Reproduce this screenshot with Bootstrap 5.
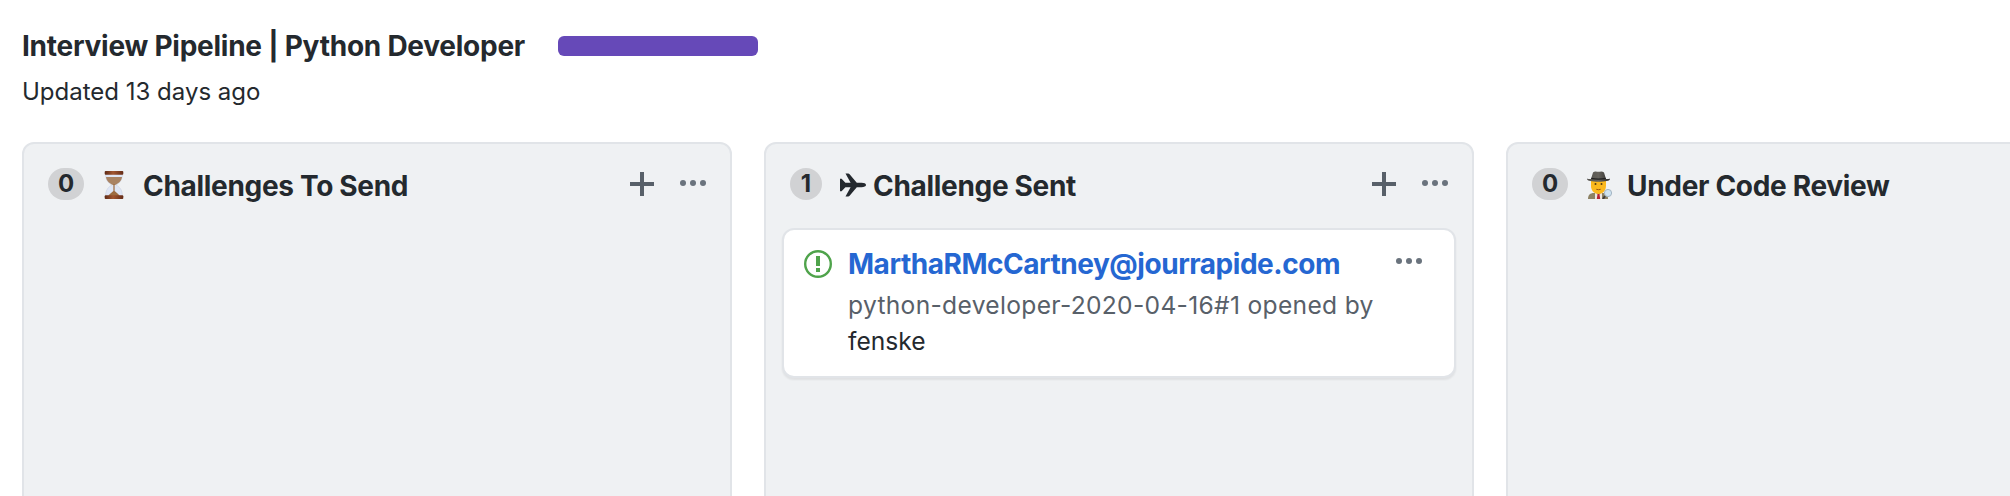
<!DOCTYPE html>
<html lang="en">
<head>
<meta charset="utf-8">
<meta name="viewport" content="width=device-width, initial-scale=1">
<title>Interview Pipeline | Python Developer</title>
<link href="https://cdn.jsdelivr.net/npm/bootstrap@5.3.0/dist/css/bootstrap.min.css" rel="stylesheet">
<style>
  body { font-family: Inter, "Liberation Sans", sans-serif; font-size: 24px; line-height: 36px; color: #24292e; background: #fff; overflow: hidden; }
  .board-page { height: 496px; padding: 25px 0 0 22px; overflow: hidden; }
  .board-head { height: 42px; }
  .head-title, .col-title, .issue-title { font-size: 28px; line-height: 42px; font-weight: 650; letter-spacing: -.31px; white-space: nowrap; }
  .head-title { width: 536px; letter-spacing: -.25px; }
  .board-bar { width: 200px; height: 20px; border-radius: 6px; background: #6649b8; }
  .updated { margin-top: 7px; }
  .board-cols { gap: 32px; margin-top: 32px; }
  .board-col { width: 710px; height: 700px; background: #eff1f3; border: 2px solid #e1e4e8; border-radius: 12px; padding: 20px 16px; }
  .col-head { height: 42px; padding: 0 8px; }
  .col-title { padding-top: 1px; }
  .count-pill { height: 32px; width: 36px; margin-top: 4px; line-height: 32px; border-radius: 16px; background: #d1d2d4; font-weight: 650; text-align: center; }
  .count-one { width: 32px; }
  .tools { gap: 26px; padding-top: 8px; }
  .tools svg, .issue-card svg, .col-head svg { display: block; flex-shrink: 0; }
  .ico-hourglass { margin: 7px 19px 0 20px; }
  .ico-plane { margin: 9px 7px 0 18px; }
  .ico-detective { margin: 7px 14px 0 18px; }
  .ico-open { margin: 7px 16px 0 0; }
  .ico-card-dots { margin-top: 15px; }
  .issue-card { height: 150px; margin-top: 22px; background: #fff; border: 2px solid #e1e4e8; border-radius: 12px; box-shadow: 0 2px 2px rgba(27,31,35,.07); padding: 13px 32px 0 20px; }
  .issue-title { color: #2567d2; letter-spacing: -.47px; }
  .issue-meta { color: #586069; font-size: 24.6px; letter-spacing: .31px; margin-top: 2px; width: 540px; white-space: nowrap; }
  .issue-author { color: #24292e; letter-spacing: 0; }
</style>
</head>
<body>
<svg width="0" height="0" class="position-absolute" aria-hidden="true">
  <defs>
    <symbol id="plus" viewBox="0 0 24 24"><path fill="#586069" d="M10 0h4v10h10v4H14v10h-4V14H0v-4h10z"/></symbol>
    <symbol id="dots" viewBox="0 0 26 6"><g fill="#6a737d"><circle cx="3" cy="3" r="3"/><circle cx="13" cy="3" r="3"/><circle cx="23" cy="3" r="3"/></g></symbol>
    <linearGradient id="wood" x1="0" x2="1"><stop offset="0" stop-color="#5d2915"/><stop offset=".45" stop-color="#a15630"/><stop offset="1" stop-color="#642b17"/></linearGradient>
    <linearGradient id="hat" x1="0" x2="1"><stop offset="0" stop-color="#55534e"/><stop offset=".5" stop-color="#65625c"/><stop offset="1" stop-color="#2d2c2a"/></linearGradient>
  </defs>
</svg>
<main class="board-page">
  <header>
    <div class="board-head d-flex align-items-start">
      <h1 class="head-title mb-0">Interview Pipeline | Python Developer</h1>
      <div class="board-bar mt-auto mb-auto"></div>
    </div>
    <div class="updated">Updated 13 days ago</div>
  </header>
  <div class="board-cols d-flex">
    <section class="board-col flex-shrink-0">
      <div class="col-head d-flex align-items-start">
        <span class="count-pill">0</span>
        <svg class="ico-hourglass" width="20" height="28" viewBox="0 0 20 28">
          <path d="M1.600 3h16.800c0 6-2.600 9-6.400 11 3.800 2 6.400 5 6.400 11H1.600c0-6 2.600-9 6.400-11C4.200 12 1.600 9 1.600 3z" fill="#dfe6f5" stroke="#cbd2e0" stroke-width=".6"/>
          <path d="M2 6h16c-.5 4.500-4 6.500-7 8H9C6 12.500 2.500 10.500 2 6z" fill="#a98363"/>
          <path d="M9.400 13h1.200v7c1.400 1.600 4 2.600 5.100 5H4.300c1.100-2.400 3.700-3.400 5.100-5z" fill="#9d6c41"/>
          <rect x=".7" y="0" width="18.600" height="3.800" rx="1" fill="url(#wood)"/>
          <rect x=".7" y="24.200" width="18.600" height="3.800" rx="1" fill="url(#wood)"/>
        </svg>
        <h2 class="col-title mb-0">Challenges To Send</h2>
        <div class="tools d-flex ms-auto"><svg width="24" height="24"><use href="#plus"/></svg><svg class="mt-2" width="26" height="6"><use href="#dots"/></svg></div>
      </div>
    </section>
    <section class="board-col flex-shrink-0">
      <div class="col-head d-flex align-items-start">
        <span class="count-pill count-one">1</span>
        <svg class="ico-plane" width="26" height="24" viewBox="0 0 26 24">
          <path fill="#24292e" d="M0 5.800h1.600l3.800 4h5.200L5.500.5h2.700c.6 0 1 .2 1.400.7l7.200 8.600h4.700c2.600 0 4.500.8 4.500 2.200s-1.900 2.200-4.500 2.200h-4.700l-7.200 8.600c-.4.500-.8.700-1.400.700H5.500l5.100-9.300H5.400l-3.800 4H0V12z"/>
        </svg>
        <h2 class="col-title mb-0">Challenge Sent</h2>
        <div class="tools d-flex ms-auto"><svg width="24" height="24"><use href="#plus"/></svg><svg class="mt-2" width="26" height="6"><use href="#dots"/></svg></div>
      </div>
      <article class="issue-card d-flex align-items-start">
        <svg class="ico-open" width="28" height="28" viewBox="0 0 28 28"><circle cx="14" cy="14" r="12.800" fill="none" stroke="#4fa34b" stroke-width="2.400"/><path fill="#4fa34b" d="M12 6h4v10h-4zM12 18h4v4h-4z"/></svg>
        <div>
          <div class="issue-title">MarthaRMcCartney@jourrapide.com</div>
          <div class="issue-meta">python-developer-2020-04-16#1 opened by<br><span class="issue-author">fenske</span></div>
        </div>
        <svg class="ico-card-dots ms-auto" width="26" height="6"><use href="#dots"/></svg>
      </article>
    </section>
    <section class="board-col flex-shrink-0">
      <div class="col-head d-flex align-items-start">
        <span class="count-pill">0</span>
        <svg class="ico-detective" width="27" height="28" viewBox="0 0 27 28">
          <path d="M2 28c0-4 2-6 6-6h8c4 0 6 2 6 6z" fill="#8d8264"/>
          <path d="M9 21l3.500 3L16 21v7H9z" fill="#ece7e2"/><path d="M11.500 23h2l.7 5h-3.400z" fill="#b92333"/>
          <path d="M5 9h15v6c0 5-3.800 8-7.500 8S5 20 5 15z" fill="#fbb81d"/>
          <circle cx="9.500" cy="13" r="1" fill="#553d12"/><circle cx="15.500" cy="13" r="1" fill="#553d12"/>
          <path d="M10.300 18.300q2.200.8 4.400 0" fill="none" stroke="#9b5911"/>
          <path d="M5 8l2-6.500C9-.3 11 .8 12.500.8S16-.3 18 1.500L20 8c2 .2 3.800-.6 4-.3.400 1.800-5 3-11.500 3S.6 9.500 1 7.700c.2-.3 2 .5 4 .3z" fill="url(#hat)"/>
          <path d="M5.200 7.300q7.300 1.600 14.600 0" fill="none" stroke="#222" stroke-width="1.200"/>
          <path d="M19 25l-2 3" stroke="#3d3d3d" stroke-width="2"/><circle cx="22" cy="22" r="3.600" fill="#cfe4f2" stroke="#a3b4c2"/>
        </svg>
        <h2 class="col-title mb-0">Under Code Review</h2>
        <div class="tools d-flex ms-auto"><svg width="24" height="24"><use href="#plus"/></svg><svg class="mt-2" width="26" height="6"><use href="#dots"/></svg></div>
      </div>
    </section>
  </div>
</main>
<script src="https://cdn.jsdelivr.net/npm/bootstrap@5.3.0/dist/js/bootstrap.bundle.min.js"></script>
</body>
</html>
